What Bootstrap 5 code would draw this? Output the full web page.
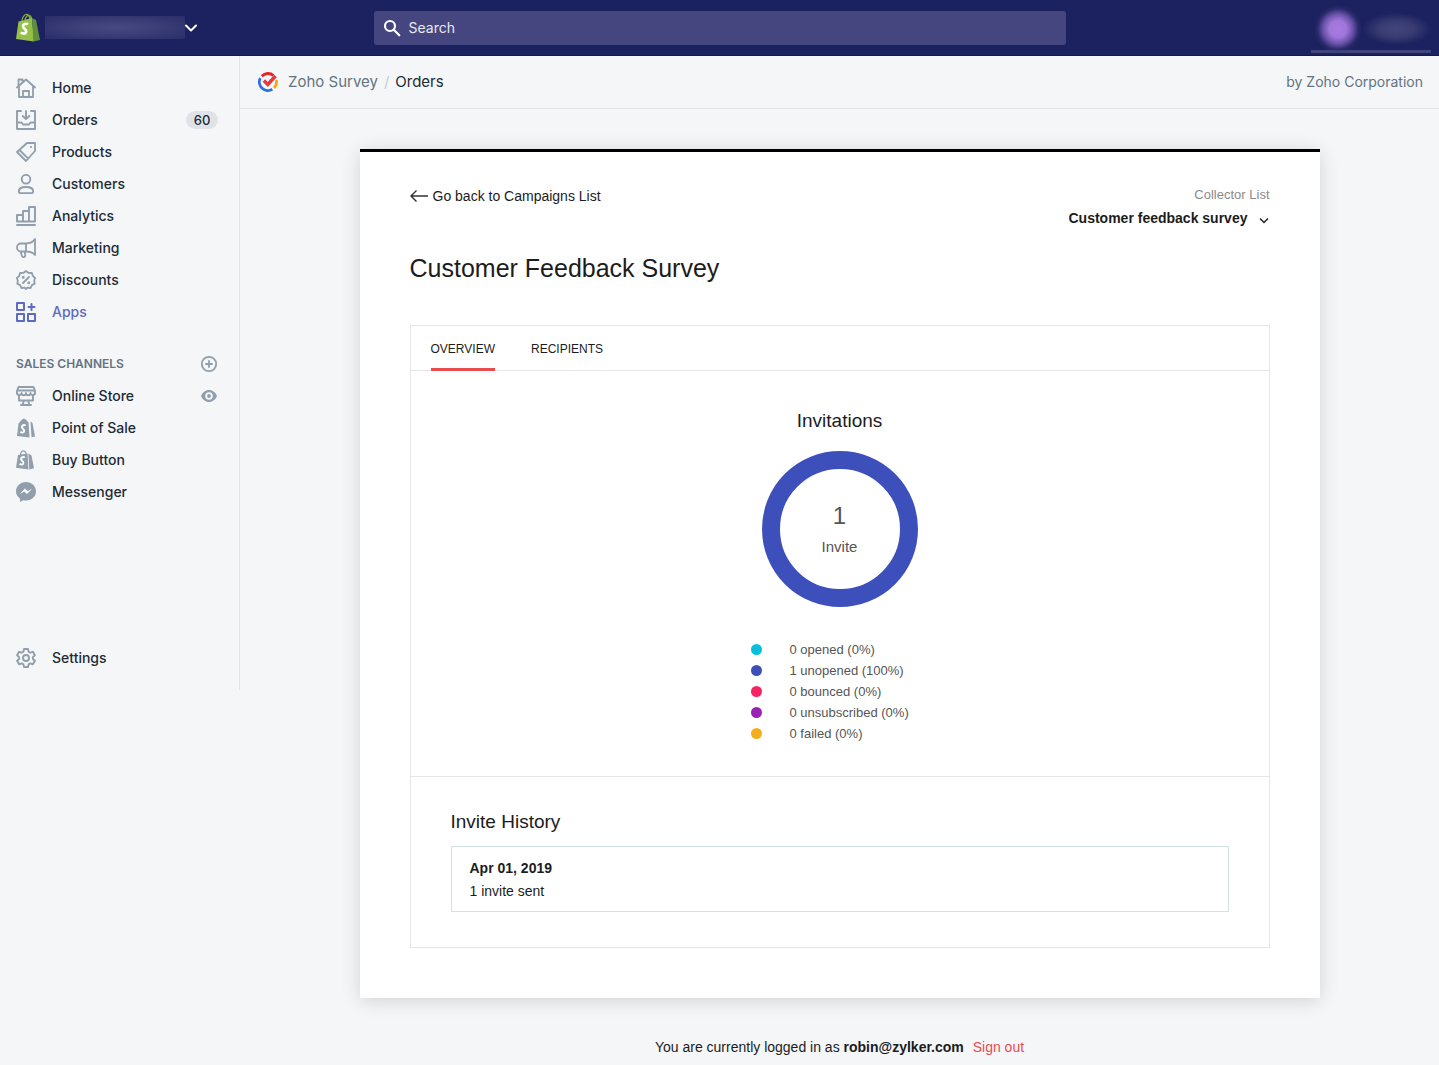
<!DOCTYPE html>
<html lang="en">
<head>
<meta charset="utf-8">
<meta name="viewport" content="width=device-width, initial-scale=1">
<title>Zoho Survey – Orders</title>
<link href="https://cdn.jsdelivr.net/npm/bootstrap@5.3.0/dist/css/bootstrap.min.css" rel="stylesheet">
<style>
body{background:#f4f6f8;color:#212b36;font-family:Inter,"Open Sans",sans-serif;font-size:14px;line-height:20px}
a{color:inherit;text-decoration:none}
svg{display:block;flex:none}
.topbar{background:#1c2260;height:56px;border-bottom:1px solid #15184f}
.bar-side{flex:1 1 0}
.shop-btn{background:none;border:0;color:#fff;padding:0 15px}
.shop-name{width:140px;height:23px;background:radial-gradient(ellipse at center,#484a83 0%,#393c75 50%,#292d69 100%)}
.search-wrap{flex:0 1 692px;height:34px;background:#454680;border-radius:3px;padding:0 9px;gap:8px}
.search-input{background:none;border:0;outline:0;color:#fff;padding:0;font-size:14px}
.search-input::placeholder{color:#e8e9f3;opacity:1}
.user-btn{width:120px;height:50px;margin-right:8px;border:0;border-bottom:3px solid #42457c;padding:5px 0 0 3px;background:none}
.avatar{width:48px;height:48px;background:radial-gradient(circle closest-side,#a87be0 0%,#a076da 35%,#6a52aa 62%,#35317490 85%,transparent 100%)}
.user-name{width:69px;height:32px;background:radial-gradient(ellipse closest-side,#42457a 0%,#383c72 50%,transparent 100%)}
.sidebar{width:240px;min-height:634px;flex:none;border-right:1px solid #dfe3e8;padding:16px 0}
.side-link{height:32px;padding:0 21px 0 16px;gap:16px;font-weight:500;color:#212b36}
.side-link svg{color:#919eab}
.side-link.active,.side-link.active svg{color:#5c6ac4}
.count-pill{background:#dfe3e8;border-radius:10px;width:32px;height:18px;line-height:18px;font-size:13px;text-align:center}
.side-head{margin-top:20px;font-size:12px;font-weight:600;color:#637381;height:32px;padding:0 21px 0 16px}
.plain-btn{border:0;background:none;padding:0;color:#919eab}
.crumb-bar{height:53px;border-bottom:1px solid #dfe3e8;padding:0 16px 0 18px;color:#637381}
.crumbs{font-size:15px;gap:10px}
.crumbs .sep{color:#c4cdd5;margin:0 6px}
.crumbs .here{color:#212b36}
.zs{font-family:"Liberation Sans",Arial,sans-serif;color:#1c1c1c}
.sheet{max-width:960px;margin:40px auto 0;background:#fff;border-top:3px solid #000;padding:32px 50px 50px;box-shadow:0 3px 18px rgba(0,0,0,.14)}
.back-link{font-size:14px;line-height:24px;gap:5px}
.collector-label{font-size:13px;line-height:22px;color:#8a8a8a}
.collector{appearance:none;border:0;padding:0 22px 0 0;height:24px;font-size:14px;font-weight:700;color:#1c1c1c;background:#fff url("data:image/svg+xml,%3Csvg xmlns='http://www.w3.org/2000/svg' width='12' height='8' fill='none' stroke='%23222' stroke-width='1.5'%3E%3Cpath d='M2 1.5l4 4 4-4'/%3E%3C/svg%3E") no-repeat right 0 bottom 5px}
.sheet-title{font-size:25px;line-height:36px;margin:20px 0 39px;font-weight:400}
.panel,.panel-part{border:1px solid #e6e6e6}
.tabs{height:44px;padding:0 20px;gap:36px}
.tab-btn{border:0;background:none;padding:0;height:45px;font-size:12px;color:#1c1c1c;border-bottom:3px solid transparent;padding-top:3px}
.tab-btn.active{border-color:#e84c4f}
.panel-part{border-width:1px 0 0}
.part-title{font-size:19px;line-height:28px;margin:0;font-weight:400}
.invites{padding:36px 0 32px}
.donut{width:156px;height:156px;border:18px solid #3c4fbb;border-radius:50%;margin:16px 0 32px;color:#555;padding-top:4px}
.donut-num{font-size:24px;line-height:32px}
.donut-cap{font-size:15px;line-height:30px}
.legend-list{width:178px;margin:0;font-size:13px;line-height:21px;color:#555}
.legend-list li{gap:28px}
.dot{width:11px;height:11px;border-radius:50%}
.history{padding:31px 40px 35px}
.history-item{margin-top:10px;border:1px solid #d3e3e4;padding:10px 18px 8px;font-size:14px;line-height:23px}
.foot{font-size:14px;line-height:22px;margin-top:38px;padding-bottom:7px;text-align:center}
.signout{color:#e84c4f;margin-left:5px}
</style>
</head>
<body>
<header class="topbar d-flex align-items-center">
  <div class="bar-side">
    <button class="shop-btn d-flex align-items-center" aria-label="Store menu">
      <svg width="26" height="30" viewBox="0 0 26 30"><path d="M7 8c0-4 3-7 5-6.500s3 3 3 6M10 8c0-3 2-6 4-5.500s2.500 2 2.500 4" fill="none" stroke="#7fae3e" stroke-width="1.300"/><path d="M3.500 8.500L17 5l2 23.500L1 26z" fill="#95bf47"/><path d="M17 5l4 2 4 20-6.500 1.500z" fill="#5e8e3e"/><path d="M13 11.500c-1.500-1.300-5-.8-5 1.800 0 2.700 3.600 2.500 3.200 5.200-.4 2.800-4 2.300-5.400.9" fill="none" stroke="#fff" stroke-width="2.600"/></svg>
      <span class="shop-name ms-1"></span>
      <svg width="12" height="8" viewBox="0 0 12 8" fill="none" stroke="#fff" stroke-width="2" stroke-linecap="round" stroke-linejoin="round"><path d="M1 1.500l5 5 5-5"/></svg>
    </button>
  </div>
  <label class="search-wrap d-flex align-items-center">
    <svg width="18" height="18" viewBox="0 0 18 18" fill="none" stroke="#fff" stroke-width="2.200"><circle cx="7" cy="7" r="5"/><path d="M10.800 10.800l5.500 5.500" stroke-linecap="round"/></svg>
    <input class="search-input flex-fill" type="search" placeholder="Search" aria-label="Search">
  </label>
  <div class="bar-side d-flex justify-content-end">
    <button class="user-btn d-flex align-items-center" aria-label="Account"><span class="avatar"></span><span class="user-name"></span></button>
  </div>
</header>

<div class="d-flex align-items-start">
  <nav class="sidebar d-flex flex-column">
    <a href="#" class="side-link d-flex align-items-center"><svg width="20" height="20" viewBox="0 0 20 20" fill="none" stroke="currentColor" stroke-width="1.800" stroke-linejoin="round" stroke-linecap="round"><path d="M1 9.500l9-8 9 8M3 8v11h14V8M7 19v-6h6v6M2.500 7.500V1.500h4V4"/></svg>Home</a>
    <a href="#" class="side-link d-flex align-items-center"><svg width="20" height="20" viewBox="0 0 20 20" fill="none" stroke="currentColor" stroke-width="1.900" stroke-linejoin="round" stroke-linecap="round"><path d="M5 1H1v18h18V1h-4M1 12.500h4.500l1.500 2h6l1.500-2H19M10 1v8M6.800 6l3.200 3.200L13.200 6"/></svg>Orders<span class="count-pill ms-auto">60</span></a>
    <a href="#" class="side-link d-flex align-items-center"><svg width="20" height="20" viewBox="0 0 20 20" fill="none" stroke="currentColor" stroke-width="1.800" stroke-linejoin="round"><path d="M11 1h8v8l-9 10-9-9zM3.500 8l8.700 8.700"/><circle cx="15" cy="5" r="1.100" fill="currentColor" stroke="none"/></svg>Products</a>
    <a href="#" class="side-link d-flex align-items-center"><svg width="20" height="20" viewBox="0 0 20 20" fill="none" stroke="currentColor" stroke-width="1.900" stroke-linejoin="round"><circle cx="10" cy="5.200" r="4.300"/><path d="M2.800 17.500c0-3 3.200-4.500 7.200-4.500s7.200 1.500 7.200 4.500q0 1.600-1.500 1.600H4.300q-1.500 0-1.500-1.600z"/></svg>Customers</a>
    <a href="#" class="side-link d-flex align-items-center"><svg width="20" height="20" viewBox="0 0 20 20" fill="none" stroke="currentColor" stroke-width="1.900" stroke-linejoin="round" stroke-linecap="round"><path d="M1 15.500V9h6v6.500zM7 15.500V5h6v10.500zM13 15.500V1h6v14.500zM1 19h18"/></svg>Analytics</a>
    <a href="#" class="side-link d-flex align-items-center"><svg width="20" height="20" viewBox="0 0 20 20" fill="none" stroke="currentColor" stroke-width="1.800" stroke-linejoin="round" stroke-linecap="round"><path d="M19 1v16c-2-2.500-5-3.500-9-3.500H5A4 4 0 0 1 5 5.500h5C14 5.500 17 4 19 1zM10 5.500v8M4.500 13.500l1.500 4.500q.5 1.300 2 1t1.200-1.700l-.5-4"/></svg>Marketing</a>
    <a href="#" class="side-link d-flex align-items-center"><svg width="20" height="20" viewBox="0 0 20 20" fill="none" stroke="currentColor" stroke-width="1.800" stroke-linejoin="round" stroke-linecap="round"><path d="M10 1l2.700 1.900 3.200.1 1 3.100L19.100 8l-.9 2.500.5 3.100-2.800 1.500-1.400 2.900-3.100-.4L10 19l-1.400-1.400-3.100.4-1.400-2.900-2.800-1.500.5-3.100L.9 8l2.200-1.900 1-3.100 3.200-.1zM7 13l6-6"/><circle cx="7.200" cy="7.300" r=".6" fill="currentColor"/><circle cx="12.800" cy="12.700" r=".6" fill="currentColor"/></svg>Discounts</a>
    <a href="#" class="side-link active d-flex align-items-center"><svg width="20" height="20" viewBox="0 0 20 20" fill="none" stroke="currentColor" stroke-width="2" stroke-linejoin="round" stroke-linecap="round"><path d="M1 1h7v7H1zM1 12h7v7H1zM12 12h7v7h-7zM15.500 2v6M12.500 5h6"/></svg>Apps</a>
    <div class="side-head d-flex align-items-center justify-content-between">SALES CHANNELS
      <button class="plain-btn" aria-label="Add sales channel"><svg width="18" height="18" viewBox="0 0 18 18" fill="none" stroke="currentColor" stroke-width="1.800" stroke-linecap="round"><circle cx="9" cy="9" r="7.200"/><path d="M9 6v6M6 9h6"/></svg></button></div>
    <a href="#" class="side-link d-flex align-items-center"><svg width="20" height="20" viewBox="0 0 20 20" fill="none" stroke="currentColor" stroke-width="1.900" stroke-linejoin="round" stroke-linecap="round"><path d="M2.500 1h15L19 5v1.500a2 2 0 0 1-4.500.5 2.200 2.200 0 0 1-4.500 0 2.200 2.200 0 0 1-4.500 0A2 2 0 0 1 1 6.500V5zM1.500 4.500h17M3 9v5.500h14V9M8 14.500L6.500 19M12 14.500l1.500 4.500M5 19h10"/></svg>Online Store<svg class="ms-auto" width="18" height="14" viewBox="0 0 18 14"><path d="M1 7c1.500-3.500 4.500-6 8-6s6.500 2.500 8 6c-1.500 3.500-4.500 6-8 6S2.500 10.500 1 7z" fill="currentColor"/><circle cx="9" cy="7" r="3.800" fill="#f4f6f8"/><circle cx="9" cy="7" r="1.900" fill="currentColor"/></svg></a>
    <a href="#" class="side-link d-flex align-items-center"><svg width="20" height="20" viewBox="0 0 20 20"><path d="M2.500 5.500L6 1.500 8 .5l2 1.200 2.500 2.800 1 15L1 18z" fill="currentColor"/><path d="M14.500 3.500l2 1.500 2.500 13.500-3.500.8z" fill="currentColor"/><path d="M9.500 7.600c-1-1-3.700-.5-3.600 1.500s2.500 1.700 2.300 3.900c-.2 2.100-2.700 1.900-3.800.7" fill="none" stroke="#fff" stroke-width="1.900"/></svg>Point of Sale</a>
    <a href="#" class="side-link d-flex align-items-center"><svg width="20" height="20" viewBox="0 0 20 20"><path d="M4.500 5c0-3 2-4.500 3.500-4s2.300 2 2.300 4" fill="none" stroke="currentColor" stroke-width="1.200"/><path d="M2 5l9.500-1.500 1 16L0 17.800zM12.300 3.500l3.200 2L18 18.300l-4.700 1.200z" fill="currentColor"/><path d="M8.700 7.600c-1-1-3.700-.5-3.600 1.500s2.500 1.700 2.300 3.900c-.2 2.100-2.700 1.900-3.800.7" fill="none" stroke="#fff" stroke-width="1.900"/></svg>Buy Button</a>
    <a href="#" class="side-link d-flex align-items-center"><svg width="20" height="20" viewBox="0 0 20 20"><path d="M10 0c5.600 0 10 4.100 10 9.300s-4.400 9.300-10 9.300c-1 0-1.900-.1-2.800-.4L4 20v-3.400C1.500 14.900 0 12.300 0 9.300 0 4.100 4.400 0 10 0z" fill="currentColor"/><path d="M3.800 12l5.200-5.500 2.700 2.700L16.200 6.500 11 12 8.300 9.500z" fill="#fff"/></svg>Messenger</a>
    <a href="#" class="side-link d-flex align-items-center mt-auto"><svg width="20" height="20" viewBox="0 0 20 20" fill="none" stroke="currentColor" stroke-width="1.900" stroke-linejoin="round"><path d="M8 1h4l.6 2.700 1.700 1 2.600-.9 2 3.500-2 1.800v1.900l2 1.800-2 3.500-2.600-.9-1.700 1L12 19H8l-.6-2.600-1.700-1-2.600.9-2-3.500 2-1.800V9.100l-2-1.800 2-3.500 2.600.9 1.700-1z"/><circle cx="10" cy="10" r="3"/></svg>Settings</a>
  </nav>

  <div class="flex-fill">
    <div class="crumb-bar d-flex align-items-center justify-content-between">
      <div class="crumbs d-flex align-items-center">
        <svg width="20" height="20" viewBox="0 0 20 20" fill="none" stroke-width="2.800"><path d="M3.800 4.200A8.500 8.500 0 0 1 15.500 3.500" stroke="#e42527"/><path d="M2.300 6.200A8.500 8.500 0 0 0 14.300 17.300" stroke="#2f6fe4"/><path d="M18.300 8A8.500 8.500 0 0 1 16 15.900" stroke="#f6a50b"/><path d="M5.800 8.500l4 4L17.500 4" stroke="#e8383d" stroke-width="3.400"/></svg>
        <div><a href="#">Zoho Survey</a><span class="sep">/</span><span class="here">Orders</span></div>
      </div>
      <span>by Zoho Corporation</span>
    </div>

    <main class="zs">
      <div class="sheet">
        <div class="d-flex justify-content-between align-items-start">
          <a href="#" class="back-link d-flex align-items-center"><svg width="18" height="12" viewBox="0 0 18 12" fill="none" stroke="#333" stroke-width="1.400"><path d="M18 6H1M6.500.6L1 6l5.500 5.400"/></svg>Go back to Campaigns List</a>
          <div class="d-flex flex-column align-items-end">
            <label class="collector-label" for="collector">Collector List</label>
            <select class="collector" id="collector"><option>Customer feedback survey</option></select>
          </div>
        </div>
        <h1 class="sheet-title">Customer Feedback Survey</h1>
        <div class="panel">
          <div class="tabs d-flex align-items-start" role="tablist">
            <button class="tab-btn active" role="tab" aria-selected="true">OVERVIEW</button>
            <button class="tab-btn" role="tab" aria-selected="false">RECIPIENTS</button>
          </div>
          <section class="panel-part invites d-flex flex-column align-items-center">
            <h2 class="part-title">Invitations</h2>
            <div class="donut d-flex flex-column align-items-center justify-content-center"><span class="donut-num">1</span><span class="donut-cap">Invite</span></div>
            <ul class="legend-list list-unstyled">
              <li class="d-flex align-items-center"><span class="dot" style="background:#08bfdb"></span>0 opened (0%)</li>
              <li class="d-flex align-items-center"><span class="dot" style="background:#3c4fbb"></span>1 unopened (100%)</li>
              <li class="d-flex align-items-center"><span class="dot" style="background:#f32564"></span>0 bounced (0%)</li>
              <li class="d-flex align-items-center"><span class="dot" style="background:#9b20b3"></span>0 unsubscribed (0%)</li>
              <li class="d-flex align-items-center"><span class="dot" style="background:#f3ae1e"></span>0 failed (0%)</li>
            </ul>
          </section>
          <section class="panel-part history">
            <h2 class="part-title">Invite History</h2>
            <div class="history-item"><strong>Apr 01, 2019</strong><div>1 invite sent</div></div>
          </section>
        </div>
      </div>
      <footer class="foot">You are currently logged in as <strong>robin@zylker.com</strong> <a href="#" class="signout">Sign out</a></footer>
    </main>
  </div>
</div>
<script src="https://cdn.jsdelivr.net/npm/bootstrap@5.3.0/dist/js/bootstrap.bundle.min.js"></script>
</body>
</html>
